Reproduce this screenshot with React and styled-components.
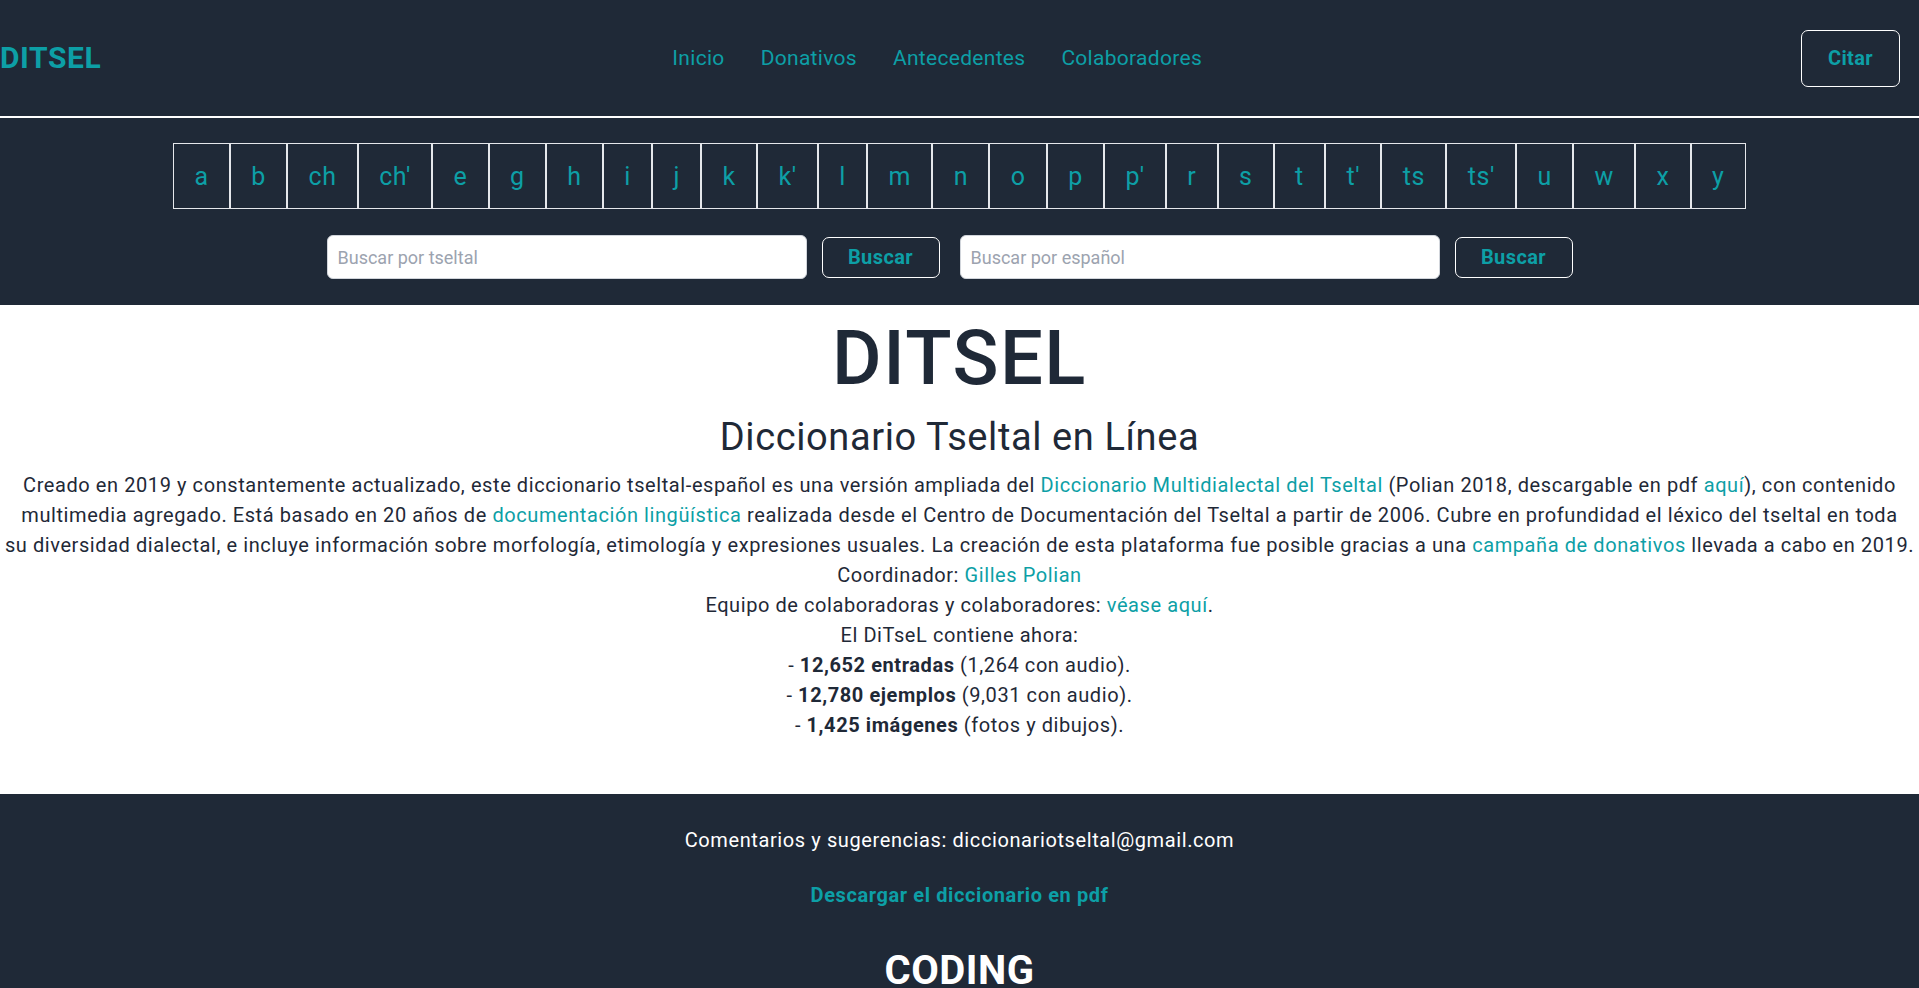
import React from "react";
import styled, { createGlobalStyle } from "styled-components";

const TEAL = "#0d9fa6";
const DARK = "#1f2937";

const GlobalStyle = createGlobalStyle`
  html, body { margin: 0; padding: 0; background: #ffffff; }
  body { font-family: Roboto, "Noto Sans", "Liberation Sans", sans-serif; color: ${DARK}; }
  * { box-sizing: border-box; }
`;

const Header = styled.header`
  background: ${DARK};
  padding-bottom: 26px;
`;

const TopBar = styled.div`
  height: 116px;
  display: flex;
  align-items: center;
  justify-content: space-between;
  padding-right: 19px;
`;

const Logo = styled.a`
  font-size: 30px;
  font-weight: 700;
  letter-spacing: 0.6px;
  color: ${TEAL};
  text-decoration: none;
  line-height: 1;
`;

const Nav = styled.nav`
  display: flex;
  align-items: center;
  padding-left: 8px;
`;

const NavLink = styled.a`
  font-size: 21px;
  letter-spacing: 0.3px;
  color: ${TEAL};
  text-decoration: none;
  margin-right: 36px;
`;

const OutlineButton = styled.button`
  background: transparent;
  border: 1px solid #ffffff;
  border-radius: 7px;
  color: ${TEAL};
  font-family: inherit;
  font-weight: 700;
  font-size: 20px;
  letter-spacing: 0.4px;
  width: ${(p) => p.$w}px;
  height: ${(p) => p.$h}px;
  cursor: pointer;
  padding: 0;
`;

const Divider = styled.div`
  height: 2px;
  background: #ffffff;
`;

const Alphabet = styled.div`
  display: flex;
  justify-content: center;
  margin-top: 25px;
`;

const Letter = styled.a`
  display: flex;
  align-items: center;
  justify-content: center;
  height: 66px;
  padding: 0 20.3px;
  border: 1px solid #e5e7eb;
  font-size: 25px;
  letter-spacing: 0.6px;
  color: ${TEAL};
  text-decoration: none;
`;

const SearchRow = styled.div`
  display: flex;
  justify-content: center;
  gap: 20px;
  margin-top: 26px;
  padding-right: 20px;
`;

const SearchForm = styled.form`
  display: flex;
  align-items: center;
  gap: 15px;
`;

const SearchInput = styled.input`
  width: 480px;
  height: 44px;
  border: 1px solid #d1d5db;
  border-radius: 6px;
  background: #ffffff;
  padding: 0 10px;
  font-family: inherit;
  font-size: 18px;
  color: ${DARK};
  &::placeholder { color: #9ca3af; }
`;

const Main = styled.main`
  text-align: center;
  padding: 15px 0 54px;
`;

const Title = styled.h1`
  margin: 0;
  font-size: 76px;
  line-height: 1;
  font-weight: 500;
  letter-spacing: 1.5px;
  color: ${DARK};
`;

const Subtitle = styled.h2`
  margin: 21px 0 0;
  font-size: 38px;
  line-height: 40px;
  font-weight: 400;
  letter-spacing: 0.6px;
  color: ${DARK};
`;

const Text = styled.p`
  margin: ${(p) => (p.$first ? "13px" : "0")} 0 0;
  font-size: 20px;
  line-height: 30px;
  letter-spacing: 0.58px;
`;

const Link = styled.a`
  color: ${TEAL};
  text-decoration: none;
`;

const Footer = styled.footer`
  background: ${DARK};
  text-align: center;
  padding: 32px 0 40px;
`;

const FooterText = styled.p`
  margin: 0;
  color: #ffffff;
  font-size: 20px;
  letter-spacing: 0.6px;
  line-height: 28px;
`;

const FooterLink = styled.a`
  display: block;
  margin-top: 27px;
  color: ${TEAL};
  font-size: 20px;
  font-weight: 700;
  letter-spacing: 0.6px;
  line-height: 28px;
  text-decoration: none;
`;

const FooterBrand = styled.h2`
  margin: 38px 0 0;
  color: #ffffff;
  font-size: 40px;
  font-weight: 700;
  letter-spacing: 0.5px;
  line-height: 48px;
`;

const letters = ["a","b","ch","ch'","e","g","h","i","j","k","k'","l","m","n","o","p","p'","r","s","t","t'","ts","ts'","u","w","x","y"];

export default function App() {
  return (
    <>
      <GlobalStyle />
      <Header>
        <TopBar>
          <Logo href="#">DITSEL</Logo>
          <Nav>
            <NavLink href="#">Inicio</NavLink>
            <NavLink href="#">Donativos</NavLink>
            <NavLink href="#">Antecedentes</NavLink>
            <NavLink href="#">Colaboradores</NavLink>
          </Nav>
          <OutlineButton $w={99} $h={57}>Citar</OutlineButton>
        </TopBar>
        <Divider />
        <Alphabet>
          {letters.map((l) => (
            <Letter key={l} href="#">{l}</Letter>
          ))}
        </Alphabet>
        <SearchRow>
          <SearchForm onSubmit={(e) => e.preventDefault()}>
            <SearchInput placeholder="Buscar por tseltal" />
            <OutlineButton $w={118} $h={41}>Buscar</OutlineButton>
          </SearchForm>
          <SearchForm onSubmit={(e) => e.preventDefault()}>
            <SearchInput placeholder="Buscar por español" />
            <OutlineButton $w={118} $h={41}>Buscar</OutlineButton>
          </SearchForm>
        </SearchRow>
      </Header>
      <Main>
        <Title>DITSEL</Title>
        <Subtitle>Diccionario Tseltal en Línea</Subtitle>
        <Text $first>
          Creado en 2019 y constantemente actualizado, este diccionario tseltal-español es una versión ampliada del{" "}
          <Link href="#">Diccionario Multidialectal del Tseltal</Link> (Polian 2018, descargable en pdf{" "}
          <Link href="#">aquí</Link>), con contenido<br />
          multimedia agregado. Está basado en 20 años de{" "}
          <Link href="#">documentación lingüística</Link> realizada desde el Centro de Documentación del Tseltal a partir de 2006. Cubre en profundidad el léxico del tseltal en toda<br />
          su diversidad dialectal, e incluye información sobre morfología, etimología y expresiones usuales. La creación de esta plataforma fue posible gracias a una{" "}
          <Link href="#">campaña de donativos</Link> llevada a cabo en 2019.
        </Text>
        <Text>
          Coordinador: <Link href="#">Gilles Polian</Link>
        </Text>
        <Text>
          Equipo de colaboradoras y colaboradores: <Link href="#">véase aquí</Link>.
        </Text>
        <Text>El DiTseL contiene ahora:</Text>
        <Text>- <b>12,652 entradas</b> (1,264 con audio).</Text>
        <Text>- <b>12,780 ejemplos</b> (9,031 con audio).</Text>
        <Text>- <b>1,425 imágenes</b> (fotos y dibujos).</Text>
      </Main>
      <Footer>
        <FooterText>Comentarios y sugerencias: diccionariotseltal@gmail.com</FooterText>
        <FooterLink href="#">Descargar el diccionario en pdf</FooterLink>
        <FooterBrand>CODING</FooterBrand>
      </Footer>
    </>
  );
}
